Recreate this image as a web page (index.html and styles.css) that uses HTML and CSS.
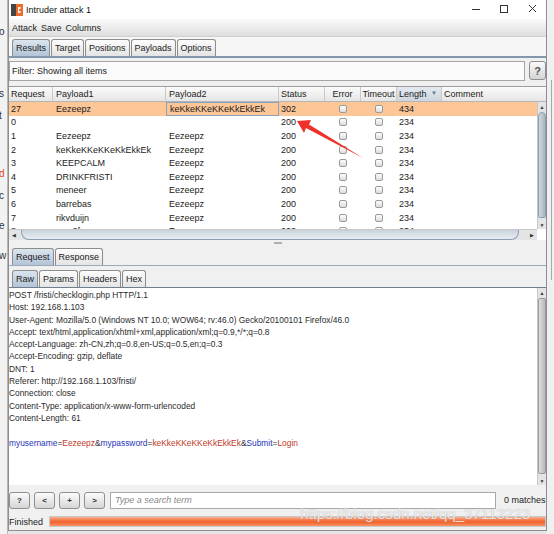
FILE: index.html
```html
<!DOCTYPE html>
<html lang="en">
<head>
  <meta charset="UTF-8">
  <title>Intruder attack 1</title>
  <link rel="stylesheet" href="styles.css">
</head>
<body>
  <div class="side-left">
    <span class="frag f1">o</span>
    <span class="frag f2">s</span>
    <span class="frag f3">t</span>
    <span class="frag f4 red">d</span>
    <span class="frag f5">c</span>
    <span class="frag f6">e</span>
    <span class="frag f7">w</span>
  </div>

  <div class="window">
    <div class="titlebar">
      <svg class="app-icon" width="12" height="12" viewBox="0 0 12 12">
        <rect x="0" y="0" width="5" height="12" fill="#444"/>
        <rect x="5" y="0" width="7" height="12" fill="#f06a2a"/>
        <path d="M7 3h2.5v2h-1.5v2h1.5v2h-2.5z" fill="#fff"/>
      </svg>
      <span class="title">Intruder attack 1</span>
      <div class="win-controls">
        <svg width="28" height="19" viewBox="0 0 28 19"><path d="M10 9.5h8" stroke="#333" stroke-width="1"/></svg>
        <svg width="28" height="19" viewBox="0 0 28 19"><rect x="10.5" y="5.5" width="7" height="7" fill="none" stroke="#333"/></svg>
        <svg width="28" height="19" viewBox="0 0 28 19"><path d="M11 5l7 7M18 5l-7 7" stroke="#333" stroke-width="1"/></svg>
      </div>
    </div>

    <div class="menubar">
      <span>Attack</span>
      <span>Save</span>
      <span>Columns</span>
    </div>

    <div class="tabs main-tabs">
      <span class="tab active">Results</span>
      <span class="tab">Target</span>
      <span class="tab">Positions</span>
      <span class="tab">Payloads</span>
      <span class="tab">Options</span>
    </div>

    <div class="panel">
      <div class="filter-row">
        <div class="filter">Filter: Showing all items</div>
        <button class="help">?</button>
      </div>

      <div class="table">
        <div class="thead">
          <div class="c c-req">Request</div>
          <div class="c c-p1">Payload1</div>
          <div class="c c-p2">Payload2</div>
          <div class="c c-st">Status</div>
          <div class="c c-err">Error</div>
          <div class="c c-to">Timeout</div>
          <div class="c c-len sorted">Length <span class="sort">&#9660;</span></div>
          <div class="c c-com">Comment</div>
        </div>
        <div class="tbody-wrap">
          <div class="tbody">
            <div class="row hl">
              <div class="c c-req">27</div><div class="c c-p1">Eezeepz</div><div class="c c-p2 focus">keKkeKKeKKeKkEkkEk</div><div class="c c-st">302</div>
              <div class="c c-err"><i class="cb"></i></div><div class="c c-to"><i class="cb"></i></div><div class="c c-len">434</div><div class="c c-com"></div>
            </div>
            <div class="row">
              <div class="c c-req">0</div><div class="c c-p1"></div><div class="c c-p2"></div><div class="c c-st">200</div>
              <div class="c c-err"><i class="cb"></i></div><div class="c c-to"><i class="cb"></i></div><div class="c c-len">234</div><div class="c c-com"></div>
            </div>
            <div class="row">
              <div class="c c-req">1</div><div class="c c-p1">Eezeepz</div><div class="c c-p2">Eezeepz</div><div class="c c-st">200</div>
              <div class="c c-err"><i class="cb"></i></div><div class="c c-to"><i class="cb"></i></div><div class="c c-len">234</div><div class="c c-com"></div>
            </div>
            <div class="row">
              <div class="c c-req">2</div><div class="c c-p1">keKkeKKeKKeKkEkkEk</div><div class="c c-p2">Eezeepz</div><div class="c c-st">200</div>
              <div class="c c-err"><i class="cb"></i></div><div class="c c-to"><i class="cb"></i></div><div class="c c-len">234</div><div class="c c-com"></div>
            </div>
            <div class="row">
              <div class="c c-req">3</div><div class="c c-p1">KEEPCALM</div><div class="c c-p2">Eezeepz</div><div class="c c-st">200</div>
              <div class="c c-err"><i class="cb"></i></div><div class="c c-to"><i class="cb"></i></div><div class="c c-len">234</div><div class="c c-com"></div>
            </div>
            <div class="row">
              <div class="c c-req">4</div><div class="c c-p1">DRINKFRISTI</div><div class="c c-p2">Eezeepz</div><div class="c c-st">200</div>
              <div class="c c-err"><i class="cb"></i></div><div class="c c-to"><i class="cb"></i></div><div class="c c-len">234</div><div class="c c-com"></div>
            </div>
            <div class="row">
              <div class="c c-req">5</div><div class="c c-p1">meneer</div><div class="c c-p2">Eezeepz</div><div class="c c-st">200</div>
              <div class="c c-err"><i class="cb"></i></div><div class="c c-to"><i class="cb"></i></div><div class="c c-len">234</div><div class="c c-com"></div>
            </div>
            <div class="row">
              <div class="c c-req">6</div><div class="c c-p1">barrebas</div><div class="c c-p2">Eezeepz</div><div class="c c-st">200</div>
              <div class="c c-err"><i class="cb"></i></div><div class="c c-to"><i class="cb"></i></div><div class="c c-len">234</div><div class="c c-com"></div>
            </div>
            <div class="row">
              <div class="c c-req">7</div><div class="c c-p1">rikvduijn</div><div class="c c-p2">Eezeepz</div><div class="c c-st">200</div>
              <div class="c c-err"><i class="cb"></i></div><div class="c c-to"><i class="cb"></i></div><div class="c c-len">234</div><div class="c c-com"></div>
            </div>
            <div class="row">
              <div class="c c-req">8</div><div class="c c-p1">wan2fsrcss</div><div class="c c-p2">Eezeepz</div><div class="c c-st">200</div>
              <div class="c c-err"><i class="cb"></i></div><div class="c c-to"><i class="cb"></i></div><div class="c c-len">234</div><div class="c c-com"></div>
            </div>
          </div>
          <div class="vscroll">
            <span class="arrow">&#9650;</span>
            <div class="track"><div class="thumb"></div></div>
            <span class="arrow">&#9660;</span>
          </div>
        </div>
        <div class="hscroll-row">
          <div class="hscroll">
            <span class="arrow">&#9664;</span>
            <div class="htrack"><div class="hthumb"></div></div>
            <span class="arrow">&#9654;</span>
          </div>
          <div class="corner"></div>
        </div>
      </div>

      <div class="splitter"><span class="grip"></span></div>

      <div class="tabs sub-tabs">
        <span class="tab active">Request</span>
        <span class="tab">Response</span>
      </div>
      <div class="tabs raw-tabs">
        <span class="tab active">Raw</span>
        <span class="tab">Params</span>
        <span class="tab">Headers</span>
        <span class="tab">Hex</span>
      </div>

      <div class="editor-wrap">
        <div class="editor">
          <div>POST /fristi/checklogin.php HTTP/1.1</div>
          <div>Host: 192.168.1.103</div>
          <div>User-Agent: Mozilla/5.0 (Windows NT 10.0; WOW64; rv:46.0) Gecko/20100101 Firefox/46.0</div>
          <div>Accept: text/html,application/xhtml+xml,application/xml;q=0.9,*/*;q=0.8</div>
          <div>Accept-Language: zh-CN,zh;q=0.8,en-US;q=0.5,en;q=0.3</div>
          <div>Accept-Encoding: gzip, deflate</div>
          <div>DNT: 1</div>
          <div>Referer: http://192.168.1.103/fristi/</div>
          <div>Connection: close</div>
          <div>Content-Type: application/x-www-form-urlencoded</div>
          <div>Content-Length: 61</div>
          <div>&nbsp;</div>
          <div><span class="pn">myusername</span>=<span class="pv">Eezeepz</span>&amp;<span class="pn">mypassword</span>=<span class="pv">keKkeKKeKKeKkEkkEk</span>&amp;<span class="pn">Submit</span>=<span class="pv">Login</span></div>
        </div>
        <div class="vscroll tall">
          <span class="arrow">&#9650;</span>
          <div class="track"><div class="thumb"></div></div>
          <span class="arrow">&#9660;</span>
        </div>
      </div>

      <div class="search-row">
        <button class="sbtn">?</button>
        <button class="sbtn">&lt;</button>
        <button class="sbtn">+</button>
        <button class="sbtn">&gt;</button>
        <div class="search">Type a search term</div>
        <span class="matches">0 matches</span>
      </div>

      <div class="status-row">
        <span>Finished</span>
        <div class="progress"></div>
      </div>
    </div>
  </div>

  <div class="side-right">
    <span class="rline"></span>
  </div>

  <svg class="red-arrow" width="554" height="534" viewBox="0 0 554 534">
    <polygon points="297,121 311,120 309,124.5 363,158 306,128 304,133" fill="#f0302a"/>
  </svg>

  <div class="watermark">https://blog.csdn.net/qq_37113223</div>
</body>
</html>
```

FILE: styles.css
```css
* {
  box-sizing: border-box;
}
body {
  margin: 0;
  width: 554px;
  height: 534px;
  overflow: hidden;
  position: relative;
  display: flex;
  background-color: #e6e6e6;
  font-family: "Liberation Sans", Arial, sans-serif;
  font-size: 9px;
  color: #222;
}
button {
  font-family: inherit;
  font-size: inherit;
}

/* background window peeking out at the sides */
.side-left {
  width: 8px;
  background-color: #f2f2f2;
  border-right: 1px solid #b8b8b8;
  display: flex;
  flex-direction: column;
  overflow: hidden;
  font-size: 10px;
  color: #333;
}
.frag {
  display: block;
  height: 12px;
  margin-left: -1px;
}
.f1 { margin-top: 26px; }
.f2 { margin-top: 50px; }
.f3 { margin-top: 10px; }
.f4 { margin-top: 46px; }
.f5 { margin-top: 10px; }
.f6 { margin-top: 18px; }
.f7 { margin-top: 18px; }
.red {
  color: #e0431a;
}
.side-right {
  width: 7px;
  background-color: #f0f0f0;
  display: flex;
  justify-content: flex-end;
}
.rline {
  width: 1px;
  height: 200px;
  margin-top: 80px;
  margin-right: 2px;
  background-color: #a8a8a8;
}

.window {
  width: 539px;
  height: 531px;
  background-color: #f0f0f0;
  border: 1px solid #8e8e8e;
  border-top: none;
  display: flex;
  flex-direction: column;
}

.titlebar {
  height: 19px;
  background-color: #fff;
  display: flex;
  align-items: center;
  padding-left: 2px;
}
.app-icon {
  margin-right: 3px;
}
.title {
  font-size: 9px;
  color: #111;
}
.win-controls {
  margin-left: auto;
  display: flex;
}

.menubar {
  height: 18px;
  display: flex;
  align-items: center;
  gap: 4px;
  padding-left: 3px;
  background: linear-gradient(#fafafa, #dedede);
  border-bottom: 1px solid #cfcfcf;
}

.tabs {
  display: flex;
  align-items: flex-end;
  padding-left: 3px;
}
.tab {
  height: 17px;
  padding: 0 3px;
  margin-right: 1px;
  display: flex;
  align-items: center;
  border: 1px solid #8d8d8d;
  border-bottom: none;
  border-radius: 3px 3px 0 0;
  background: linear-gradient(#fdfdfd, #e4e4e4);
  color: #222;
}
.tab.active {
  background: linear-gradient(#dbe5ef, #b3c4d6);
}
.main-tabs {
  height: 21px;
  background-color: #f6f6f6;
  border-bottom: 2px solid #8396ab;
}

.panel {
  flex: 1;
  display: flex;
  flex-direction: column;
}

.filter-row {
  display: flex;
  height: 20px;
  margin-top: 3px;
}
.filter {
  flex: 1;
  display: flex;
  align-items: center;
  padding-left: 2px;
  background-color: #fbfbfb;
  border: 1px solid #a5a5a5;
}
.help {
  width: 17px;
  height: 19px;
  margin-left: 4px;
  padding: 0;
  border: 1px solid #8f8f8f;
  border-radius: 3px;
  background: linear-gradient(#fafafa, #d4d4d4);
  color: #555;
  font-weight: bold;
  font-size: 11px;
}

.table {
  margin-top: 5px;
  border-top: 1px solid #9c9c9c;
  display: flex;
  flex-direction: column;
}
.thead {
  height: 15px;
  display: flex;
  background: linear-gradient(#fbfbfb, #e5e5e5);
  border-bottom: 1px solid #b5b5b5;
}
.thead .c {
  border-right: 1px solid #c8c8c8;
  color: #222;
}
.thead .sorted {
  background: linear-gradient(#e3e9ef, #cdd6df);
  position: relative;
}
.sort {
  position: absolute;
  right: 4px;
  top: 3px;
  font-size: 6px;
  color: #5a7a9a;
}
.c {
  display: flex;
  align-items: center;
  padding-left: 2px;
  white-space: nowrap;
  overflow: hidden;
  flex-shrink: 0;
}
.c-req { width: 44px; }
.c-p1 { width: 113px; padding-left: 3px; }
.c-p2 { width: 113px; padding-left: 3px; }
.c-st { width: 46px; }
.c-err { width: 36px; justify-content: center; padding-left: 0; }
.c-to { width: 36px; justify-content: center; padding-left: 0; }
.c-len { width: 45px; }
.c-com { width: 95px; }
.thead .c-com {
  width: 104px;
  border-right: none;
}

.tbody-wrap {
  height: 127px;
  display: flex;
}
.tbody {
  width: 528px;
  background-color: #fff;
  overflow: hidden;
}
.row {
  height: 13.6px;
  display: flex;
}
.row.hl {
  background-color: #fdc697;
}
.focus {
  border: 1px solid #8aa3bd;
}
.cb {
  display: block;
  width: 8px;
  height: 8px;
  border: 1px solid #9a9a9a;
  border-radius: 2px;
  background: linear-gradient(#fefefe, #dcdcdc);
}

.vscroll {
  width: 9px;
  display: flex;
  flex-direction: column;
  align-items: center;
  background-color: #e4e4e4;
  border-left: 1px solid #c8c8c8;
}
.vscroll .arrow,
.hscroll .arrow {
  font-size: 5px;
  color: #333;
  height: 9px;
  display: flex;
  align-items: center;
  justify-content: center;
}
.track {
  flex: 1;
  width: 100%;
  display: flex;
  flex-direction: column;
}
.thumb {
  flex: 1;
  margin: 1px 0 2px;
  border: 1px solid #8b9db0;
  border-radius: 5px 5px 2px 2px;
  background: linear-gradient(90deg, #cfd8e0, #a9b4bf);
}
.vscroll.tall .thumb {
  border-color: #9a9a9a;
  border-radius: 2px;
  background: linear-gradient(90deg, #dedede, #b8b8b8);
}

.hscroll-row {
  height: 11px;
  display: flex;
}
.hscroll {
  width: 528px;
  display: flex;
  align-items: center;
  background-color: #e4e4e4;
  border-top: 1px solid #c8c8c8;
}
.hscroll .arrow {
  width: 10px;
}
.htrack {
  flex: 1;
  height: 100%;
  display: flex;
}
.hthumb {
  flex: 1;
  margin: 0 8px 0 2px;
  border: 1px solid #8b9db0;
  border-top: none;
  border-radius: 0 0 8px 8px;
  background: linear-gradient(#c9d3dc, #e8edf2);
}
.corner {
  flex: 1;
  background-color: #fff;
}

.splitter {
  height: 6px;
  display: flex;
  justify-content: center;
  align-items: center;
}
.grip {
  width: 8px;
  height: 2px;
  background-color: #b0b0b0;
}

.sub-tabs {
  height: 19px;
  margin-top: 1px;
  border-bottom: 1px solid #9aaabb;
}
.raw-tabs {
  height: 22px;
  border-bottom: 1px solid #6f7f90;
}

.editor-wrap {
  height: 197px;
  display: flex;
}
.editor {
  width: 528px;
  background-color: #fff;
  padding-top: 1px;
  font-size: 8.4px;
  line-height: 12.3px;
  color: #2a2a2a;
  white-space: nowrap;
  overflow: hidden;
}
.pn {
  color: #2434b8;
}
.pv {
  color: #c23a2a;
}

.search-row {
  height: 22px;
  margin-top: 4px;
  display: flex;
  align-items: center;
  gap: 4px;
}
.sbtn {
  width: 21px;
  height: 17px;
  padding: 0;
  border: 1px solid #8f8f8f;
  border-radius: 3px;
  background: linear-gradient(#fbfbfb, #d6d6d6);
  color: #333;
  font-weight: bold;
  font-size: 8px;
}
.search {
  width: 386px;
  height: 17px;
  margin-left: 1px;
  display: flex;
  align-items: center;
  padding-left: 4px;
  background-color: #fff;
  border: 1px solid #a8a8a8;
  color: #888;
  font-style: italic;
}
.matches {
  margin-left: 4px;
}

.status-row {
  height: 17px;
  margin-top: 2px;
  display: flex;
  align-items: center;
}
.progress {
  flex: 1;
  height: 11px;
  margin-left: 6px;
  border: 1px solid #c9c9c9;
  background: linear-gradient(#fbb08f, #f26a3a 45%, #f1662f 60%, #f8946a);
}

.red-arrow {
  position: absolute;
  left: 0;
  top: 0;
  pointer-events: none;
}
.watermark {
  position: absolute;
  left: 300px;
  top: 505px;
  font-size: 15.5px;
  color: rgba(255, 255, 255, 0.75);
  text-shadow: 0 0 1px rgba(120, 120, 120, 0.6);
  white-space: nowrap;
  letter-spacing: -0.2px;
}
```
